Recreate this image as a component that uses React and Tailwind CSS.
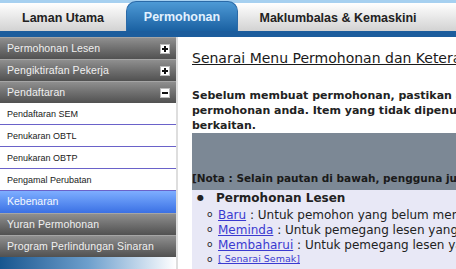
const sideFont = { fontFamily: '"Liberation Sans", Arial, sans-serif' };

const Toggle = ({ open }) => (
  <span className="flex items-center justify-center w-[10px] h-[10px] bg-white border border-[#bbbbbb] text-black">
    <svg width="8" height="8" viewBox="0 0 8 8">
      <rect x="1" y="3" width="6" height="2" fill="#111" />
      {!open && <rect x="3" y="1" width="2" height="6" fill="#111" />}
    </svg>
  </span>
);

const Header = ({ label, toggle, open }) => (
  <div className="flex items-center justify-between h-[22px] pl-[7px] pr-[6px] border-t border-[#a5a5a5] bg-linear-to-b from-[#8f8f8f] to-[#515151] text-[#f0f0f0] text-[10.5px] tracking-[0.1px]">
    <span>{label}</span>
    {toggle && <Toggle open={open} />}
  </div>
);

const SubItem = ({ label }) => (
  <div className="flex items-center h-[22px] pl-[7px] pt-[3px] bg-white border-b border-[#6a62c9] text-[#1a1a1a] text-[9px]">
    {label}
  </div>
);

const Sidebar = () => (
  <aside className="w-[178px] shrink-0 border-r-2 border-[#dedede] flex flex-col" style={sideFont}>
    <Header label="Permohonan Lesen" toggle />
    <Header label="Pengiktirafan Pekerja" toggle />
    <Header label="Pendaftaran" toggle open />
    <SubItem label="Pendaftaran SEM" />
    <SubItem label="Penukaran OBTL" />
    <SubItem label="Penukaran OBTP" />
    <SubItem label="Pengamal Perubatan" />
    <div className="flex items-center h-[22px] pl-[7px] bg-linear-to-b from-[#7eaeff] to-[#3b70e4] text-[#f4f8ff] text-[10.5px]">
      Kebenaran
    </div>
    <Header label="Yuran Permohonan" />
    <Header label="Program Perlindungan Sinaran" />
    <div className="h-[12px] bg-linear-to-r from-[#16568f] via-[#6d9fcc] to-white" />
  </aside>
);

const SubRow = ({ link, rest, small }) => (
  <div className="flex items-center h-[15px]">
    <span className="w-[11px] shrink-0 text-[9px] leading-none">o</span>
    <a className={small ? "text-[#3a3ad0] underline text-[9.5px]" : "text-[#3a3ad0] underline"}>{link}</a>
    {rest && <span className="whitespace-pre">{rest}</span>}
  </div>
);

export default function App() {
  return (
    <div className="w-[456px] h-[269px] overflow-hidden bg-white flex flex-col">
      <nav
        className="flex items-end h-[31px] shrink-0 border-t-[3px] border-[#a6d0f0] bg-linear-to-b from-white to-[#d2d2d2] text-[12.5px] font-bold text-[#222]"
        style={sideFont}
      >
        <div className="w-[126px] h-full flex items-center justify-center pt-[2px]">Laman Utama</div>
        <div className="w-[112px] h-[30px] flex items-center justify-center pt-[2px] rounded-t-[10px] border border-b-0 border-[#2a6aa8] bg-linear-to-b from-[#4d9ad6] to-[#1a61a2] text-[#e2f1ff]">
          Permohonan
        </div>
        <div className="w-[200px] h-full flex items-center justify-center pt-[2px]">Maklumbalas &amp; Kemaskini</div>
      </nav>
      <div className="h-[6px] shrink-0 bg-[#1c5d9d]" />
      <div className="flex flex-1 min-h-0">
        <Sidebar />
        <main
          className="flex-1 min-w-0 pl-[14px] pt-[12px] text-[#222] overflow-hidden whitespace-nowrap"
          style={{ fontFamily: '"DejaVu Sans", Verdana, sans-serif' }}
        >
          <h1 className="text-[14px] leading-[18px] underline text-[#1a1a1a]">Senarai Menu Permohonan dan Keterangan</h1>
          <p className="mt-[21px] text-[11px] font-bold leading-[15px]">
            Sebelum membuat permohonan, pastikan anda membaca
            <br />
            permohonan anda. Item yang tidak dipenuhi akan
            <br />
            berkaitan.
          </p>
          <div className="h-[57px] flex items-end pb-[3px] bg-[#7c8895] text-[10.5px] font-bold text-[#1a1a1a]">
            [Nota : Selain pautan di bawah, pengguna juga boleh]
          </div>
          <div className="bg-[#e8e8f6] h-[100px] text-[12px]">
            <div className="flex items-center h-[15px] pl-[5px] font-bold">
              <span className="w-[19px] shrink-0 text-[8px]">●</span>
              Permohonan Lesen
            </div>
            <div className="pl-[15px] pt-[2px]">
              <SubRow link="Baru" rest=" : Untuk pemohon yang belum memiliki lesen" />
              <SubRow link="Meminda" rest=" : Untuk pemegang lesen yang ingin meminda" />
              <SubRow link="Membaharui" rest=" : Untuk pemegang lesen yang ingin membaharui" />
              <SubRow link="[ Senarai Semak]" small />
            </div>
          </div>
        </main>
      </div>
    </div>
  );
}
